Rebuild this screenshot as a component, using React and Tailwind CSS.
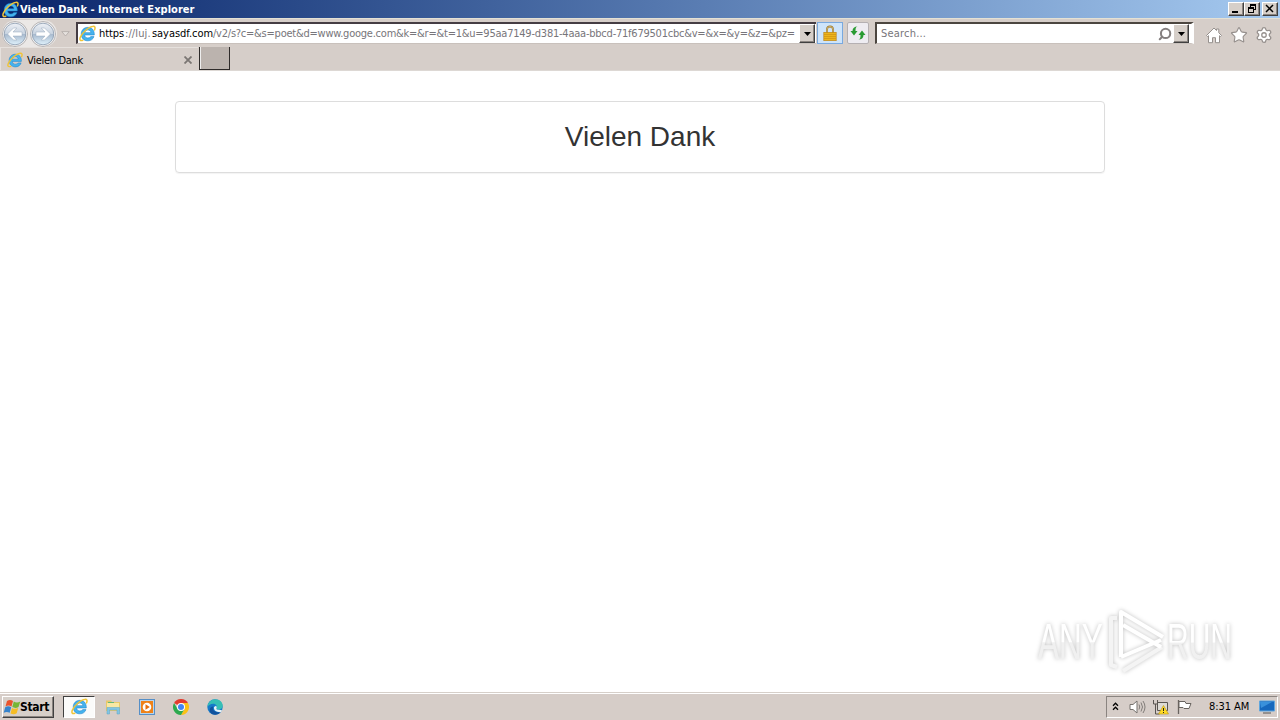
import { Star, Settings, Search } from "lucide-react";

const RAISED =
  "bg-[#d6cfc9] border border-t-white border-l-white border-r-[#404040] border-b-[#404040] shadow-[inset_-1px_-1px_0_#8a8480]";

function IeLogo({ className }) {
  return (
    <svg viewBox="0 0 16 16" className={className} fill="none">
      <path
        d="M14.400 9.400H5.300c.2 1.900 1.500 2.800 3.100 2.800 1.300 0 2.200-.5 2.700-1.300h3c-.8 2.500-2.900 4-5.700 4-3.700 0-6.300-2.500-6.300-6.300S4.700 2.200 8.400 2.200c3.900 0 6.200 2.900 6 7.200ZM5.400 7.200h5.800C11 5.500 10 4.700 8.400 4.700S5.700 5.500 5.400 7.200Z"
        fill="#45b3ee"
        stroke="#1b7fc6"
        strokeWidth=".5"
      />
      <path
        d="M14.600 4.600c1-2.200.4-3.500-1.500-3.300C9.500 1.600 3.400 6.700 1.400 11.200c-1.200 2.700-.3 4.100 2.200 3.100"
        stroke="#f0c437"
        strokeWidth="1.400"
        strokeLinecap="round"
      />
    </svg>
  );
}

function NavArrow({ flip }) {
  return (
    <svg viewBox="0 0 26 26" className={flip ? "size-[26px] shrink-0 -scale-x-100" : "size-[26px] shrink-0"}>
      <defs>
        <linearGradient id={flip ? "navFwd" : "navBack"} x1="0" y1="0" x2="0" y2="1">
          <stop offset="0" stopColor="#eef1f6" />
          <stop offset=".48" stopColor="#c8d3e0" />
          <stop offset=".5" stopColor="#a6b8cd" />
          <stop offset="1" stopColor="#dff1fb" />
        </linearGradient>
      </defs>
      <circle cx="13" cy="13" r="12.500" fill="#f4f4f4" stroke="#b6b3b4" />
      <circle cx="13" cy="13" r="10.800" fill={`url(#${flip ? "navFwd" : "navBack"})`} stroke="#8999ad" strokeWidth=".8" />
      <path
        d="M5.500 13 11.500 7h3.300L11 11h9v4h-9l3.800 4h-3.300Z"
        fill="#fff"
        stroke="#9aabbd"
        strokeWidth=".5"
      />
    </svg>
  );
}

function DropButton() {
  return (
    <div className={`flex h-[19px] w-4 shrink-0 items-center justify-center ${RAISED}`}>
      <svg viewBox="0 0 7 4" className="h-1 w-[7px]">
        <path d="M0 0h7L3.500 4Z" fill="#000" />
      </svg>
    </div>
  );
}

function TitleBar() {
  return (
    <header className="flex h-[18px] items-center bg-linear-to-r from-[#0a246a] to-[#a6caf0] pr-[2px] pl-[2px]">
      <IeLogo className="size-[17px] shrink-0" />
      <h1 className="ml-px flex-1 text-[11px] font-bold tracking-[0.030px] whitespace-pre text-white">
        Vielen Dank - Internet Explorer
      </h1>
      <div className="flex">
        <div className={`h-[14px] w-4 ${RAISED}`}>
          <svg viewBox="0 0 14 12" className="h-3 w-[14px]">
            <path d="M3 8h6v2H3Z" />
          </svg>
        </div>
        <div className={`h-[14px] w-4 ${RAISED}`}>
          <svg viewBox="0 0 14 12" className="h-3 w-[14px]" fill="none" stroke="#000" shapeRendering="crispEdges">
            <path d="M5.500 4V1.500h5v5H9M5 2.500h6M3.500 4.500h5v5h-5ZM3 5.500h6" />
          </svg>
        </div>
        <div className={`ml-[2px] h-[14px] w-4 ${RAISED}`}>
          <svg viewBox="0 0 14 12" className="h-3 w-[14px]" stroke="#000" strokeWidth="1.500">
            <path d="m3 2 7 7M10 2 3 9" />
          </svg>
        </div>
      </div>
    </header>
  );
}

function NavBar() {
  return (
    <div className="flex h-[29px] items-start border-t border-[#e4e1d4] pt-[3px] pl-[2px]">
      <div className="-mt-[2px] flex h-[27px] w-[55px] items-center gap-[2px] rounded-full bg-[#ebe8e6]">
        <NavArrow />
        <NavArrow flip />
      </div>
      <svg viewBox="0 0 9 6" className="mt-[9px] ml-[4px] h-[6px] w-[9px] shrink-0">
        <path d="M.8.600h7.400L4.500 5Z" fill="#e6e1de" stroke="#aaa4a1" strokeWidth=".7" />
      </svg>

      <div className="ml-[6px] flex h-[22px] w-[740px] items-center border-t-2 border-b border-l-2 border-t-[#453d43] border-b-[#c9c1bc] border-l-[#453d43] bg-white">
        <IeLogo className="ml-px size-[17px] shrink-0" />
        <p className="ml-[3px] flex-1 overflow-hidden text-[11px] whitespace-nowrap text-[#77757a]">
          <span className="inline-block w-[26px] tracking-[-0.100px] text-black">https</span>
          <span className="inline-block w-[27px] tracking-[0.100px]">://luj.</span>
          <span className="inline-block w-[61px] tracking-[-0.050px] text-black">sayasdf.com</span>
          <span className="tracking-[-0.230px]">
            /v2/s?c=&amp;s=poet&amp;d=www.googe.com&amp;k=&amp;r=&amp;t=1&amp;u=95aa7149-d381-4aaa-bbcd-71f679501cbc&amp;v=&amp;x=&amp;y=&amp;z=&amp;pz=
          </span>
        </p>
        <DropButton />
        <div className="w-px" />
      </div>

      <div className="ml-px flex h-[22px] w-[26px] items-center justify-center border border-[#79a9df] bg-[#cee4fa]">
        <svg viewBox="0 0 14 16" className="h-4 w-[14px]">
          <path d="M4 8V4.500a3 3 0 0 1 6 0V8" fill="none" stroke="#99762e" strokeWidth="1.800" />
          <path d="M4 8V4.500a3 3 0 0 1 6 0V8" fill="none" stroke="#e5cb88" strokeWidth=".7" />
          <rect x=".8" y="7.300" width="12.400" height="8.400" fill="#edb51b" stroke="#b87d12" strokeWidth=".6" />
          <path d="M1 9.500h12M1 11.500h12M1 13.500h12" stroke="#c98b13" strokeWidth=".6" />
        </svg>
      </div>
      <div className="ml-1 flex h-[22px] w-[22px] items-center justify-center rounded-xs border border-[#b5b0b2] bg-[#eeecf1]">
        <svg viewBox="0 0 16 14" className="h-[14px] w-4" fill="#299b32">
          <path d="M7.500.500C5.800 1 5.500 2 5.500 5h2L4 9.500.500 5h2C2.500 2 4.500.500 7.500.500Z" />
          <path d="M8.500 13.500c1.700-.5 2-1.500 2-4.500h-2L12 4.500 15.500 9h-2c0 3-2 4.500-5 4.500Z" />
        </svg>
      </div>

      <div className="ml-[6px] flex h-[22px] w-[319px] items-center border-t-2 border-r-[3px] border-b border-l-2 border-t-[#4c4640] border-r-white border-b-[#c9c1bc] border-l-[#4c4640] bg-white">
        <span className="ml-[4px] flex-1 text-[11px] tracking-[0.200px] text-[#77757a]">Search...</span>
        <Search className="mr-px size-[14px] -scale-x-100 text-[#858080]" strokeWidth={3.5} />
        <DropButton />
        <div className="w-[2px]" />
      </div>

      <div className="mt-[4px] ml-[11px] flex gap-[7px]">
        <svg viewBox="0 0 18 18" className="size-[18px]">
          <path
            d="M1.500 9.500 9 2l2.500 2.500V3h2.300v3.800l2.700 2.700-1 1-1-.8v7h-4v-5h-3v5h-4v-7l-1 .8Z"
            fill="#fff"
            stroke="#96908d"
          />
        </svg>
        <Star className="size-[18px] text-[#96908d]" fill="#fff" strokeWidth={1.5} />
        <Settings className="size-[18px] text-[#96908d]" fill="#fff" strokeWidth={1.7} />
      </div>
    </div>
  );
}

function TabStrip() {
  return (
    <div className="flex h-6 items-start border-b border-[#ddd8d4]">
      <div className="flex h-[23px] w-[198px] items-center border-t border-l border-[#e6e1dd] pl-[6px]">
        <IeLogo className="mt-[2px] size-4 shrink-0" />
        <span className="mt-[2px] ml-[4px] flex-1 text-[11px] tracking-[-0.300px]">Vielen Dank</span>
        <svg viewBox="0 0 8 8" className="mt-[2px] mr-[6px] size-2" stroke="#7b7673" strokeWidth="1.800">
          <path d="m.5.500 7 7M7.500.500l-7 7" />
        </svg>
      </div>
      <div className="ml-px h-[23px] w-[31px] border-r border-b border-l border-[#2e2b2a] bg-[#bbb3ae] shadow-[inset_1px_0_0_#eee]" />
    </div>
  );
}

function Watermark() {
  return (
    <svg
      viewBox="0 0 230 70"
      className="absolute right-[18px] bottom-[16px] h-[70px] w-[230px] drop-shadow-[0_0_2px_rgba(0,0,0,0.25)]"
    >
      <defs>
        <linearGradient id="mark" x1="0" y1="0" x2="0" y2="1">
          <stop offset=".5" stopColor="#fff" />
          <stop offset=".52" stopColor="#f0f0f0" />
        </linearGradient>
      </defs>
      <g fill="url(#mark)" fontFamily="'Liberation Sans', Arial, sans-serif" fontSize="50">
        <text transform="translate(6 53) scale(.63 1)">ANY</text>
        <text transform="translate(135 53) scale(.6 1)">RUN</text>
      </g>
      <g fill="none" stroke="#fff" strokeWidth="4" strokeLinejoin="round">
        <path d="M85 12h-6v47l6 2M91 65l39-24" stroke="#f4f4f4" />
        <path d="M89 51V6l42 25M91 19l38 22M89 51l40-17" />
      </g>
    </svg>
  );
}

function Page() {
  return (
    <main className="relative flex-1 bg-white pt-[30px]">
      <section className="mx-auto h-[72px] w-[930px] rounded border border-[#ddd] pt-[18px] text-center shadow-[0_1px_1px_rgba(0,0,0,0.05)]">
        <h2 className="font-['Liberation_Sans',Arial,sans-serif] text-[28px] leading-[33px] text-[#333]">Vielen Dank</h2>
      </section>
      <Watermark />
    </main>
  );
}

function Taskbar() {
  return (
    <footer className="flex h-7 items-center border-t border-[#d6cfc9] bg-[#d6cdc8] shadow-[inset_0_1px_0_#fff]">
      <div className={`ml-[2px] flex h-[22px] w-[52px] items-center ${RAISED}`}>
        <svg viewBox="0 0 18 16" className="h-4 w-[18px] shrink-0">
          <path d="M4 2c2-1.500 4-1.500 6 0L8.500 7.500C6.500 6.300 4.500 6.300 2.500 7.500Z" fill="#e9532c" />
          <path d="M10.800 2.500c2 1.300 4 1.300 6.500.1L15.500 8c-2 1.200-4 1.200-6.200.1Z" fill="#76b636" />
          <path d="M2.200 8.300c2-1.300 4-1.300 6 0L6.700 13.800c-2-1.200-4-1.200-6 0Z" fill="#3683cc" />
          <path d="M9 8.900c2 1.200 4 1.200 6.200.1l-1.500 5.300c-2 1.200-4 1.200-6.200.1Z" fill="#f6bd25" />
        </svg>
        <span className="-ml-px text-[12px] font-bold tracking-[-0.300px]">Start</span>
      </div>

      <div className="ml-[9px] flex h-[22px] w-8 items-center justify-center border border-t-[#404040] border-r-white border-b-white border-l-[#404040] bg-[#fbfbfa]">
        <IeLogo className="size-[17px]" />
      </div>

      {/* Explorer */}
      <svg viewBox="0 0 16 16" className="ml-[10px] size-4">
        <path d="M1 1.500h5l1 1.500h8V12H1Z" fill="#e8c96a" />
        <path d="M2 4h12v6H2Z" fill="#f8e8a4" />
        <path d="M3 3h6v1H3Z" fill="#66b875" />
        <path d="M2 8.500h12.500V15H12v-4H4.500v4H2Z" fill="#82c5e3" stroke="#5aa5c6" strokeWidth=".5" />
      </svg>

      {/* Media Player */}
      <svg viewBox="0 0 16 16" className="ml-[18px] size-4">
        <rect x=".5" y=".5" width="15" height="15" fill="#b8d5ed" stroke="#568fc7" />
        <rect x="2" y="2" width="12" height="12" fill="#ef8219" />
        <circle cx="8" cy="8" r="4.300" fill="#fff" />
        <path d="M6.500 5.300v5.400L10.800 8Z" fill="#e56f0d" />
      </svg>

      {/* Chrome */}
      <svg viewBox="0 0 16 16" className="ml-[18px] size-4">
        <path d="M8 8 1.070 4A8 8 0 0 1 14.930 4Z" fill="#e33b2e" />
        <path d="M8 8V4h6.930A8 8 0 0 1 8 16l3.500-6Z" fill="#fbc116" />
        <path d="M8 8l3.460 2L8 16A8 8 0 0 1 1.070 4l3.500 6Z" fill="#2da94f" />
        <circle cx="8" cy="8" r="4" fill="#fff" />
        <circle cx="8" cy="8" r="3" fill="#4285f4" />
      </svg>

      {/* Edge */}
      <svg viewBox="0 0 16 16" className="ml-[18px] size-4">
        <circle cx="8" cy="8" r="7.700" fill="#167ac9" />
        <path d="M.4 8C1 3.500 4 .3 8.200.3c4.400 0 7.500 3 7.500 6.300 0 2.500-1.800 4-4 4-1.600 0-2.700-.6-2.300-1.400 1.500-2-.5-4.500-3.200-4.500C3.500 4.700 1.300 6 .4 8Z" fill="#36bfb5" />
        <path d="M6.300 7.500c-1.500 3.500 1.700 6.500 7.400 5.500-3 4-9.300 3.500-10.800-.5C2 9.800 3.800 7.700 6.300 7.500Z" fill="#12529d" />
        <path d="M9 6.800c1.200 1.300.7 2.300.3 2.900.2.800 1.500 1.100 2.700 1l3 .5-1 2C9 13.500 6.500 11 7 8Z" fill="#e7f2f7" />
      </svg>

      <div className="mr-[2px] ml-auto flex h-[22px] w-[172px] items-center border border-t-[#8a8480] border-r-white border-b-white border-l-[#8a8480]">
        <svg viewBox="0 0 7 9" className="ml-[5px] h-[9px] w-[7px]" fill="none" stroke="#000" strokeWidth="1.300">
          <path d="M1 3.700 3.500 1.200 6 3.700M1 7.700l2.500-2.500L6 7.700" />
        </svg>
        <svg viewBox="0 0 18 16" className="ml-[9px] h-4 w-[18px]" fill="none" stroke="#77736f">
          <path d="M2 5.500h3L9 2v12l-4-3.500H2Z" fill="#fff" />
          <path d="M11 5.500q1.500 2.500 0 5M13 3.500q3 4.500 0 9M15 2q4 6 0 12" strokeWidth=".9" />
        </svg>
        <svg viewBox="0 0 17 16" className="ml-[6px] h-4 w-[17px]">
          <path d="M5.500 3.500h10v8h-10ZM8 14h6" fill="#dedbd5" stroke="#595551" />
          <path d="M1.500 1v4h4V1M3.500 5v10h4" fill="none" stroke="#595551" />
          <path d="m11.500 6.500 5 8.500h-10Z" fill="#ffdb25" stroke="#bb9413" strokeWidth=".6" />
          <path d="M11.500 9v3M11.500 13v1" stroke="#222" />
        </svg>
        <svg viewBox="0 0 17 16" className="ml-[7px] h-4 w-[17px]">
          <path d="M2.500 1v14" stroke="#68635f" strokeWidth="1.300" />
          <path d="M3 2.500h6l1 2h5l-2 5H8l-1-1H3Z" fill="#fff" stroke="#68635f" />
        </svg>
        <span className="ml-4 w-[42px] text-[11px] tracking-[-0.050px] whitespace-nowrap">8:31 AM</span>
        <svg viewBox="0 0 16 14" className="ml-[8px] h-[14px] w-4 shrink-0">
          <path d="M.5 1h15v10H.5Z" fill="#1768bd" stroke="#60a6dd" />
          <path d="M1 2h12L2 8Z" fill="#3a91db" />
          <path d="M4 13h8" stroke="#555" />
        </svg>
      </div>
    </footer>
  );
}

export default function App() {
  return (
    <div className="flex h-[720px] w-[1280px] flex-col overflow-hidden bg-[#d6cec9] font-['DejaVu_Sans_Condensed','DejaVu_Sans',sans-serif] leading-none text-black">
      <TitleBar />
      <NavBar />
      <TabStrip />
      <Page />
      <Taskbar />
    </div>
  );
}
